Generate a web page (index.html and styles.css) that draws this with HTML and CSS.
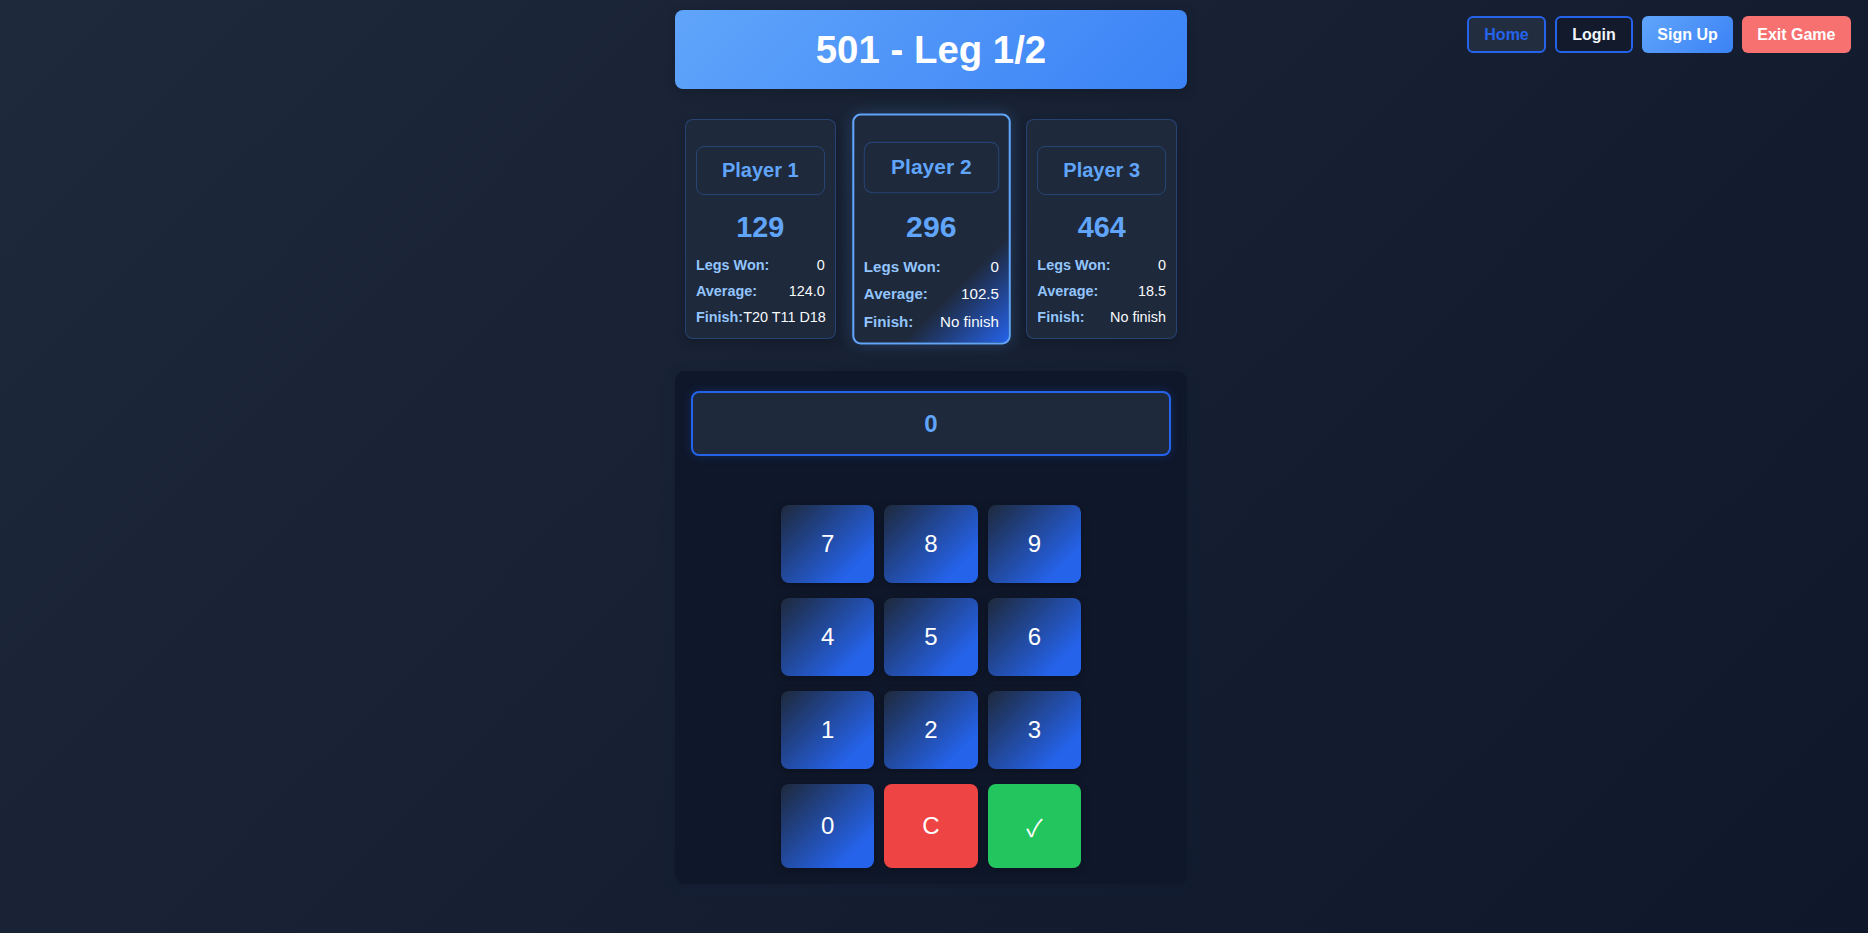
FILE: index.html
```html
<!DOCTYPE html>
<html lang="en">
<head>
<meta charset="utf-8">
<title>501 - Leg 1/2</title>
<link rel="stylesheet" href="styles.css">
</head>
<body>
<nav class="nav">
  <a class="nav-btn nav-home" href="#">Home</a>
  <a class="nav-btn nav-login" href="#">Login</a>
  <a class="nav-btn nav-signup" href="#">Sign Up</a>
  <a class="nav-btn nav-exit" href="#">Exit Game</a>
</nav>
<div class="page">
  <main class="game">
    <header class="title">501 - Leg 1/2</header>

    <section class="players">
      <div class="card">
        <div class="name">Player 1</div>
        <div class="score">129</div>
        <div class="stat"><span class="label">Legs Won:</span><span class="value">0</span></div>
        <div class="stat"><span class="label">Average:</span><span class="value">124.0</span></div>
        <div class="stat"><span class="label">Finish:</span><span class="value">T20 T11 D18</span></div>
      </div>
      <div class="card card-active">
        <div class="name">Player 2</div>
        <div class="score">296</div>
        <div class="stat"><span class="label">Legs Won:</span><span class="value">0</span></div>
        <div class="stat"><span class="label">Average:</span><span class="value">102.5</span></div>
        <div class="stat"><span class="label">Finish:</span><span class="value">No finish</span></div>
      </div>
      <div class="card">
        <div class="name">Player 3</div>
        <div class="score">464</div>
        <div class="stat"><span class="label">Legs Won:</span><span class="value">0</span></div>
        <div class="stat"><span class="label">Average:</span><span class="value">18.5</span></div>
        <div class="stat"><span class="label">Finish:</span><span class="value">No finish</span></div>
      </div>
    </section>

    <section class="panel">
      <div class="display">0</div>
      <div class="keypad">
        <button class="key">7</button>
        <button class="key">8</button>
        <button class="key">9</button>
        <button class="key">4</button>
        <button class="key">5</button>
        <button class="key">6</button>
        <button class="key">1</button>
        <button class="key">2</button>
        <button class="key">3</button>
        <button class="key">0</button>
        <button class="key key-clear">C</button>
        <button class="key key-ok">✓</button>
      </div>
    </section>
  </main>
</div>
</body>
</html>
```

FILE: styles.css
```css
* {
  box-sizing: border-box;
}

html, body {
  margin: 0;
  padding: 0;
}

body {
  min-height: 100vh;
  font-family: "Liberation Sans", Arial, sans-serif;
  background: linear-gradient(135deg, #1e293b 0%, #0f172a 100%);
  color: #f1f5f9;
}

/* top-right navigation (overlay) */
.nav {
  position: absolute;
  top: 16px;
  right: 17px;
  display: flex;
  gap: 8.5px;
}

.nav-btn {
  height: 37px;
  display: inline-flex;
  align-items: center;
  padding: 0 15.5px;
  border-radius: 6px;
  font-size: 16px;
  font-weight: 700;
  text-decoration: none;
  color: #ffffff;
}

.nav-home {
  border: 2px solid #2563eb;
  background: #232d40;
  color: #2563eb;
}

.nav-login {
  border: 2px solid #2563eb;
  background: #121a2c;
  color: #f1f5f9;
}

.nav-signup {
  background: linear-gradient(135deg, #60a5fa, #3b82f6);
}

.nav-exit {
  background: #f87171;
}

/* main column */
.page {
  display: flex;
  justify-content: center;
  padding-right: 6px;
}

.game {
  width: 512px;
  padding-top: 10px;
}

.title {
  padding: 17.5px 0;
  border-radius: 8px;
  background: linear-gradient(135deg, #60a5fa 0%, #3b82f6 100%);
  color: #ffffff;
  font-size: 38.4px;
  font-weight: 700;
  text-align: center;
  line-height: 44px;
  box-shadow: 0 4px 12px rgba(0, 0, 0, 0.2);
}

/* players */
.players {
  display: flex;
  gap: 20px;
  padding: 0 10px;
  margin-top: 30px;
  align-items: flex-start;
}

.card {
  flex: 1;
  min-width: 0;
  padding: 10px 10px 8px;
  border: 1px solid rgba(59, 130, 246, 0.3);
  border-radius: 8px;
  background: #1e293b;
  box-shadow: 0 4px 10px rgba(0, 0, 0, 0.2);
}

.card-active {
  padding: 9px 9px 7px;
  border: 2px solid #60a5fa;
  background: linear-gradient(135deg, #1e293b 0%, #1e293b 72%, #2563eb 100%);
  transform: scale(1.05);
  box-shadow: 0 0 14px rgba(96, 165, 250, 0.2);
}

.name {
  margin-top: 16px;
  padding: 12px 4px;
  border: 1px solid rgba(59, 130, 246, 0.3);
  border-radius: 8px;
  color: #60a5fa;
  font-size: 20px;
  font-weight: 700;
  line-height: 23px;
  text-align: center;
}

.score {
  margin: 15.5px 0 8.4px;
  color: #60a5fa;
  font-size: 28.8px;
  font-weight: 700;
  line-height: 33px;
  text-align: center;
}

.stat {
  display: flex;
  justify-content: space-between;
  height: 26px;
  line-height: 26px;
  font-size: 14.4px;
  white-space: nowrap;
}

.label {
  color: #93c5fd;
  font-weight: 700;
}

.value {
  color: #f8fafc;
}

/* input panel */
.panel {
  margin-top: 32px;
  padding: 20px 16px 16px;
  border-radius: 10px;
  background: #0f172a;
  box-shadow: 0 4px 18px rgba(59, 130, 246, 0.08), 0 2px 8px rgba(0, 0, 0, 0.3);
}

.display {
  height: 65px;
  border: 2px solid #2563eb;
  border-radius: 8px;
  background: #1e293b;
  color: #60a5fa;
  font-size: 24px;
  font-weight: 700;
  line-height: 61px;
  text-align: center;
  box-shadow: 0 0 10px rgba(37, 99, 235, 0.25);
}

.keypad {
  width: 300px;
  margin: 49.5px auto 0;
  display: grid;
  grid-template-columns: repeat(3, 1fr);
  grid-template-rows: 78px 78px 78px 84px;
  column-gap: 10px;
  row-gap: 15px;
}

.key {
  border: none;
  border-radius: 8px;
  background: linear-gradient(135deg, #1e293b 0%, #2563eb 80%);
  color: #ffffff;
  font-family: "Liberation Sans", Arial, sans-serif;
  font-size: 24px;
  font-weight: 400;
  padding: 0;
  box-shadow: 0 2px 8px rgba(0, 0, 0, 0.3);
}

.key-clear {
  background: #ef4444;
}

.key-ok {
  background: #22c55e;
  font-family: "Liberation Sans", "Noto Sans CJK SC", sans-serif;
}
```
